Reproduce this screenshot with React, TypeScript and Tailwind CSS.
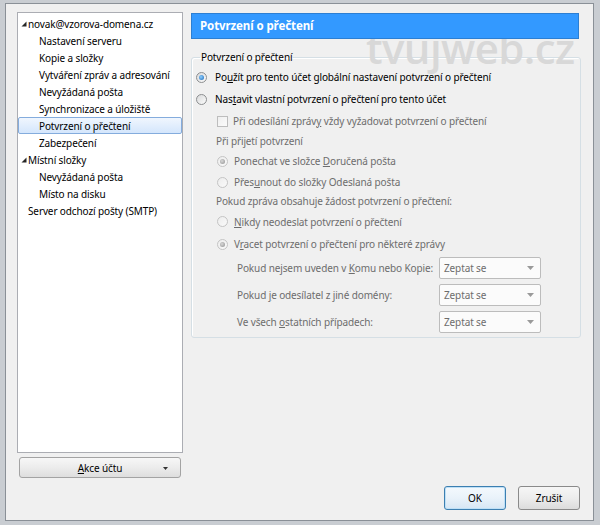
import React from "react";

const F = "font-['Noto_Sans',sans-serif]";

function Tri() {
  return (
    <svg width="6" height="6" viewBox="0 0 6 6" className="shrink-0">
      <path d="M5.5 0.5 V5.5 H0.5 Z" fill="#262626" />
    </svg>
  );
}

function Radio({ checked, disabled }: { checked?: boolean; disabled?: boolean }) {
  return (
    <span
      className={
        "w-[11px] h-[11px] rounded-full border flex items-center justify-center shrink-0 " +
        (disabled
          ? "border-[#c4c4c4] bg-gradient-to-br from-[#ececec] to-[#fafafa]"
          : "border-[#8c8e90] bg-gradient-to-br from-[#d9dadb] to-[#fbfbfb]")
      }
    >
      {checked && (
        <span
          className={
            "w-[5px] h-[5px] rounded-full " +
            (disabled
              ? "bg-[radial-gradient(circle_at_40%_40%,#d8d8d8,#8f8f8f)]"
              : "bg-[radial-gradient(circle_at_40%_40%,#8fd0ff,#1764b5)]")
          }
        />
      )}
    </span>
  );
}

function Checkbox({ disabled }: { disabled?: boolean }) {
  return (
    <span
      className={
        "w-[11px] h-[11px] border shrink-0 " +
        (disabled
          ? "border-[#bdbdbd] bg-gradient-to-br from-[#efefef] to-[#fbfbfb]"
          : "border-[#8c8e90] bg-gradient-to-br from-[#dcdcdc] to-[#fafafa]")
      }
    />
  );
}

function Select({ value }: { value: string }) {
  return (
    <div className="w-[102px] h-[22px] border border-[#bcbcbc] rounded-[2px] bg-[#fbfbfb] flex items-center pl-[4px] pr-[6px] text-[#6d6d6d]">
      <span className="flex-1">{value}</span>
      <svg width="7" height="4" viewBox="0 0 7 4">
        <path d="M0 0 H7 L3.5 4 Z" fill="#9a9a9a" />
      </svg>
    </div>
  );
}

type Item = { label: React.ReactNode; level: number; exp?: boolean; sel?: boolean };

const tree: Item[] = [
  { label: "novak@vzorova-domena.cz", level: 0, exp: true },
  { label: "Nastavení serveru", level: 1 },
  { label: "Kopie a složky", level: 1 },
  { label: "Vytváření zpráv a adresování", level: 1 },
  { label: "Nevyžádaná pošta", level: 1 },
  { label: "Synchronizace a úložiště", level: 1 },
  { label: "Potvrzení o přečtení", level: 1, sel: true },
  { label: "Zabezpečení", level: 1 },
  { label: "Místní složky", level: 0, exp: true },
  { label: "Nevyžádaná pošta", level: 1 },
  { label: "Místo na disku", level: 1 },
  { label: "Server odchozí pošty (SMTP)", level: 0 },
];

export default function App() {
  return (
    <div className={"w-[600px] h-[525px] relative overflow-hidden bg-[#c9cdd2] pt-[3px] pl-[5px] pr-[6px] pb-[4px] text-[10px] leading-[14px] tracking-[-0.12px] text-black " + F}>
      <div className="h-full border border-[#8a9097] bg-[#f0f0f0] flex pt-[8px] pl-[11px] pr-[12px]">
        {/* left column */}
        <div className="w-[166px] flex flex-col">
          <div className="h-[441px] border border-[#abadb3] bg-white pt-[2px]">
            {tree.map((it, i) => (
              <div
                key={i}
                className={
                  "h-[17px] flex items-center whitespace-nowrap " +
                  (it.sel ? "border border-[#84acdd] rounded-[2px] bg-gradient-to-b from-[#f0f6fe] to-[#d4e6fc] " : "") +
                  (it.level === 1 ? (it.sel ? "pl-[20px]" : "pl-[21px]") : "pl-[3px]")
                }
              >
                {it.level === 0 && (it.exp ? <span className="mr-[1px] flex"><Tri /></span> : <span className="w-[7px]" />)}
                <span>{it.label}</span>
              </div>
            ))}
          </div>
          <div className="mt-[4px] mx-[2px] h-[21px] border border-[#a3a3a3] rounded-[3px] bg-gradient-to-b from-[#f7f7f7] via-[#ececec] to-[#dedede] flex items-center relative">
            <span className="flex-1 text-center">
              <u className="underline-offset-[1px]">A</u>kce účtu
            </span>
            <svg width="5" height="3" viewBox="0 0 5 3" className="absolute right-[12px] top-[9px]">
              <path d="M0 0 H5 L2.5 3 Z" fill="#333" />
            </svg>
          </div>
        </div>

        {/* right column */}
        <div className="flex-1 ml-[8px] flex flex-col pt-[1px] pb-[10px] relative">
          <div className="h-[26px] mr-[2px] bg-[#3399ff] border border-[#2c7fd3] flex items-center pl-[8px] relative z-10">
            <span className="text-white font-bold text-[11.5px] tracking-[-0.1px]">Potvrzení o přečtení</span>
          </div>

          <fieldset className="mt-[10px] min-w-0 border border-[#d5dfe5] rounded-[3px] pl-[4px] pb-[4px] shadow-[inset_1px_1px_0_#ffffff]">
            <legend className="ml-[4px] px-[1px] leading-[16px]">Potvrzení o přečtení</legend>
            <div className="pt-[1px]">
              <div className="h-[22px] flex items-center gap-[8px]">
                <Radio checked />
                <span>Po<u className="underline-offset-[1px]">u</u>žít pro tento účet globální nastavení potvrzení o přečtení</span>
              </div>
              <div className="h-[22px] flex items-center gap-[8px]">
                <Radio />
                <span>Nas<u className="underline-offset-[1px]">t</u>avit vlastní potvrzení o přečtení pro tento účet</span>
              </div>
              <div className="text-[#6d6d6d] pl-[21px]">
                <div className="h-[22px] flex items-center gap-[5px]">
                  <Checkbox disabled />
                  <span>Při odesílání zpráv<u className="underline-offset-[1px]">y</u> vždy vyžadovat potvrzení o přečtení</span>
                </div>
                <div className="h-[18px] flex items-center -ml-[1px]">Při přijetí potvrzení</div>
                <div className="h-[22px] flex items-center gap-[6px]">
                  <Radio checked disabled />
                  <span>Ponechat ve složce <u className="underline-offset-[1px]">D</u>oručená pošta</span>
                </div>
                <div className="h-[20px] flex items-center gap-[6px]">
                  <Radio disabled />
                  <span>Přes<u className="underline-offset-[1px]">u</u>nout do složky Odeslaná pošta</span>
                </div>
                <div className="h-[18px] flex items-center -ml-[1px]">Pokud zpráva obsahuje žádost potvrzení o přečtení:</div>
                <div className="h-[23px] flex items-center gap-[6px]">
                  <Radio disabled />
                  <span><u className="underline-offset-[1px]">N</u>ikdy neodeslat potvrzení o přečtení</span>
                </div>
                <div className="h-[22px] flex items-center gap-[6px]">
                  <Radio checked disabled />
                  <span>V<u className="underline-offset-[1px]">r</u>acet potvrzení o přečtení pro některé zprávy</span>
                </div>
                <div className="pl-[20px] flex flex-col gap-[5px] mt-[2px]">
                  <div className="flex items-center">
                    <span className="w-[202px]">Pokud nejsem uveden v <u className="underline-offset-[1px]">K</u>omu nebo Kopie:</span>
                    <Select value="Zeptat se" />
                  </div>
                  <div className="flex items-center">
                    <span className="w-[202px]">Pokud <u className="underline-offset-[1px]">j</u>e odesílatel z jiné domény:</span>
                    <Select value="Zeptat se" />
                  </div>
                  <div className="flex items-center">
                    <span className="w-[202px]">Ve všech <u className="underline-offset-[1px]">o</u>statních případech:</span>
                    <Select value="Zeptat se" />
                  </div>
                </div>
              </div>
            </div>
          </fieldset>

          <div className="flex-1" />
          <div className="flex justify-end gap-[12px] mr-[1px]">
            <div className="w-[62px] h-[24px] border border-[#3c7fb1] rounded-[3px] bg-gradient-to-b from-[#f4f9fd] via-[#e9f2fa] to-[#d6e6f4] flex items-center justify-center shadow-[inset_0_0_0_1px_#bfe0f6]">OK</div>
            <div className="w-[62px] h-[24px] border border-[#8a8a8a] rounded-[3px] bg-gradient-to-b from-[#f6f6f6] via-[#ececec] to-[#dcdcdc] flex items-center justify-center">Zrušit</div>
          </div>
        </div>
      </div>

      <div className="absolute left-[366px] top-[32px] z-[5] text-[42px] leading-[32px] font-semibold text-[#d8d8d8] font-['Open_Sans',sans-serif] pointer-events-none tracking-[-0.6px]">
        tvujweb.cz
      </div>
    </div>
  );
}
